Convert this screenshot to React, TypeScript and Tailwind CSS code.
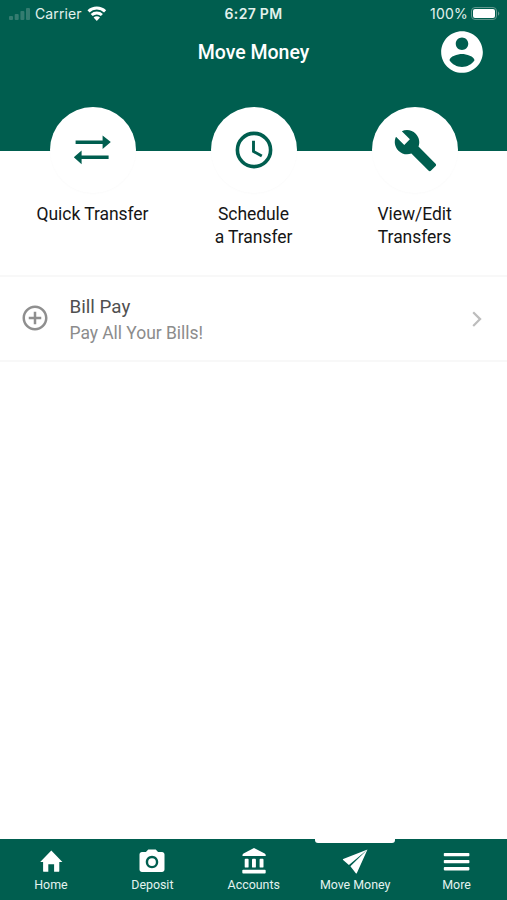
import type { ReactNode } from "react";

const actions = [
  { label: ["Quick Transfer"], icon: <TransferIcon /> },
  { label: ["Schedule", "a Transfer"], icon: <ClockIcon /> },
  { label: ["View/Edit", "Transfers"], icon: <WrenchIcon /> },
];

const tabs = [
  { label: "Home", icon: <HomeIcon /> },
  { label: "Deposit", icon: <CameraIcon /> },
  { label: "Accounts", icon: <BankIcon /> },
  { label: "Move Money", icon: <PlaneIcon />, active: true },
  { label: "More", icon: <MenuIcon /> },
];

function TransferIcon() {
  return (
    <svg width="44" height="44" viewBox="0 0 44 44" fill="currentColor">
      <path d="M4.600 12.400h27V7.400L39.800 14.100 31.600 20.900V16H4.600z" />
      <path d="M37.600 27.500H10.600v-5L2.800 29.300l7.800 6.900v-5.100h27z" />
    </svg>
  );
}

function ClockIcon() {
  return (
    <svg width="44" height="44" viewBox="0 0 44 44" fill="none" stroke="currentColor">
      <circle cx="22" cy="22" r="16.6" strokeWidth="3.6" />
      <path d="M21.500 12.800v10.600l8.300 4.600" strokeWidth="2.900" />
    </svg>
  );
}

function WrenchIcon() {
  return (
    <svg width="45" height="45" viewBox="0 0 24 24" fill="currentColor" className="ml-px">
      <path d="M22.7 19l-9.1-9.1c.9-2.3.4-5-1.5-6.9-2-2-5-2.4-7.4-1.3L9 6 6 9 1.6 4.7C.4 7.1.9 10.1 2.9 12.1c1.9 1.9 4.6 2.4 6.9 1.5l9.1 9.1c.4.4 1 .4 1.4 0l2.3-2.3c.5-.4.5-1.1.1-1.4z" />
    </svg>
  );
}

function HomeIcon() {
  return (
    <svg width="28" height="28" viewBox="0 0 28 28" fill="currentColor">
      <path d="M14.300 2.500 3.200 14h2.900v8.900q0 .9.900.9h4.300v-7.500h5.800v7.500h4.300q.9 0 .9-.9V14h3.100z" />
    </svg>
  );
}

function CameraIcon() {
  return (
    <svg width="30" height="30" viewBox="0 0 24 24" fill="currentColor">
      <circle cx="12" cy="12" r="3.1" />
      <path d="M9 2 7.170 4H4c-1.100 0-2 .9-2 2v12c0 1.100.9 2 2 2h16c1.100 0 2-.9 2-2V6c0-1.100-.9-2-2-2h-3.170L15 2H9zm3 15c-2.760 0-5-2.240-5-5s2.240-5 5-5 5 2.240 5 5-2.240 5-5 5z" />
    </svg>
  );
}

function BankIcon() {
  return (
    <svg width="28" height="28" viewBox="0 0 28 28" fill="currentColor">
      <path d="M14 0 24.700 5.500q1 .600 1 1.500v.900H2.500V7q0-.900 1-1.500z" />
      <rect x="4.700" y="10.800" width="3.900" height="8.800" rx=".9" />
      <rect x="12" y="10.800" width="3.900" height="8.800" rx=".9" />
      <rect x="19.600" y="10.800" width="3.900" height="8.800" rx=".9" />
      <rect x="2.300" y="21.800" width="23.400" height="3.600" rx=".9" />
    </svg>
  );
}

function PlaneIcon() {
  return (
    <svg width="28" height="28" viewBox="0 0 28 28" fill="currentColor">
      <path d="M26.500 1.500 2.200 11.100q-.8.400-.1 1l5.800 4.800zM26.500 1.500 9.400 18.300l5.400 6.900q.6.700 1.100-.2z" />
    </svg>
  );
}

function MenuIcon() {
  return (
    <svg width="28" height="28" viewBox="0 0 28 28" fill="currentColor">
      <rect x=".8" y="5" width="25.600" height="3.300" rx=".8" />
      <rect x=".8" y="12" width="25.600" height="3.300" rx=".8" />
      <rect x=".8" y="19.100" width="25.600" height="3.300" rx=".8" />
    </svg>
  );
}

function StatusBar() {
  return (
    <div className="grid h-7 grid-cols-3 items-center pl-[9px] pr-[6px] font-['Inter','Liberation_Sans',sans-serif] text-[14px] leading-none text-[#e3f1ed]">
      <div className="flex items-center">
        <svg width="22" height="14" viewBox="0 0 22 14" className="mr-1 fill-[#347c70]">
          <rect y="9" width="4" height="4" rx="1" />
          <rect x="5.700" y="7" width="4" height="6" rx="1" />
          <rect x="11.400" y="4" width="4" height="9" rx="1" />
          <rect x="17" y="1" width="4" height="12" rx="1" />
        </svg>
        <span className="tracking-[0.1px]">Carrier</span>
        <svg width="20" height="16" viewBox="0 0 20 16" className="ml-[5px]" fill="none" stroke="white" strokeWidth="3">
          <path d="M1.500 5.300a12 12 0 0 1 16.600 0" />
          <path d="M4.700 9a7.400 7.400 0 0 1 10.200 0" />
          <path d="M6.600 11.600a4.600 4.600 0 0 1 6.400 0l-3.200 3.300z" fill="white" stroke="none" />
        </svg>
      </div>
      <span className="-ml-[3px] text-center font-semibold tracking-[0.3px]">6:27 PM</span>
      <div className="flex items-center justify-end">
        <span className="tracking-[0.2px]">100%</span>
        <svg width="31" height="16" viewBox="0 0 31 16" className="ml-[2px]">
          <rect x="1.500" y="1.500" width="25" height="12" rx="3.500" fill="none" stroke="#60978d" />
          <rect x="3" y="3" width="22" height="9" rx="2" fill="white" />
          <path d="M28 5.200q2.600 2.300 0 4.600z" fill="#60978d" />
        </svg>
      </div>
    </div>
  );
}

function Action({ label, icon }: { label: string[]; icon: ReactNode }) {
  return (
    <button className="flex flex-col items-center">
      <span className="flex h-[86px] w-[86px] items-center justify-center rounded-full bg-white text-[#005e4f] shadow-[0_1px_2px_rgba(0,0,0,0.02)]">
        {icon}
      </span>
      <span className="mt-[10px] text-[17.5px] leading-[23px] tracking-[-0.05px] text-[#161616]">
        {label.map((line) => (
          <span key={line} className="block">{line}</span>
        ))}
      </span>
    </button>
  );
}

export default function App() {
  return (
    <div className="flex h-[900px] w-[507px] flex-col overflow-hidden bg-white font-['Roboto','Liberation_Sans',sans-serif]">
      <header className="h-[151px] shrink-0 bg-[#005e4f] text-white">
        <StatusBar />
        <div className="-mt-px grid h-[50px] grid-cols-[1fr_auto_1fr] items-center pr-5">
          <span />
          <h1 className="pl-5 pt-[2px] text-[19.5px] font-medium leading-none">Move Money</h1>
          <svg width="50" height="50" viewBox="0 0 24 24" className="justify-self-end" fill="currentColor">
            <path d="M12 2C6.480 2 2 6.480 2 12s4.480 10 10 10 10-4.480 10-10S17.520 2 12 2zm0 3c1.660 0 3 1.340 3 3s-1.340 3-3 3-3-1.340-3-3 1.340-3 3-3zm0 14.200c-2.500 0-4.710-1.280-6-3.220.03-1.990 4-3.080 6-3.080 1.990 0 5.970 1.090 6 3.080-1.290 1.940-3.500 3.220-6 3.220z" />
          </svg>
        </div>
      </header>

      {/* Quick actions overlap the bottom of the header */}
      <section className="relative -mt-11 grid h-[168px] shrink-0 grid-cols-3 items-start px-3">
        {actions.map((action) => (
          <Action key={action.label[0]} label={action.label} icon={action.icon} />
        ))}
      </section>

      <main className="flex-1">
        <button className="flex h-[87px] w-full items-center border-y-2 border-[#f8f8f8] bg-white pl-5 pr-[18px] text-left">
          <svg width="30" height="30" viewBox="0 0 24 24" fill="#8f8f8f" className="mb-px">
            <path d="M13 7h-2v4H7v2h4v4h2v-4h4v-2h-4V7zm-1-5C6.480 2 2 6.480 2 12s4.480 10 10 10 10-4.480 10-10S17.520 2 12 2zm0 18c-4.410 0-8-3.590-8-8s3.590-8 8-8 8 3.590 8 8-3.590 8-8 8z" />
          </svg>
          <span className="ml-[19.5px] flex flex-1 flex-col pt-[2px]">
            <span className="text-[18.8px] leading-[26px] text-[#505050]">Bill Pay</span>
            <span className="text-[17.5px] leading-[26px] tracking-[-0.05px] text-[#8c8c8c]">Pay All Your Bills!</span>
          </span>
          <svg width="24" height="24" viewBox="0 0 24 24" fill="none" stroke="#bdbdbd" strokeWidth="2.200">
            <path d="m8.200 5.200 6.900 6.900-6.900 6.900" />
          </svg>
        </button>
      </main>

      <nav className="grid h-[61px] shrink-0 grid-cols-5 bg-[#005e4f] text-white">
        {tabs.map((tab) => (
          <button key={tab.label} className="relative flex flex-col items-center pl-[0.5px]">
            {tab.active && <span className="absolute top-0 h-1 w-20 rounded-b-[3px] bg-white" />}
            <span className="mt-[7px] flex h-[31px] items-center">{tab.icon}</span>
            <span className="whitespace-nowrap text-[12.4px] leading-[16px] text-[#e3f3ef]">{tab.label}</span>
          </button>
        ))}
      </nav>
    </div>
  );
}
